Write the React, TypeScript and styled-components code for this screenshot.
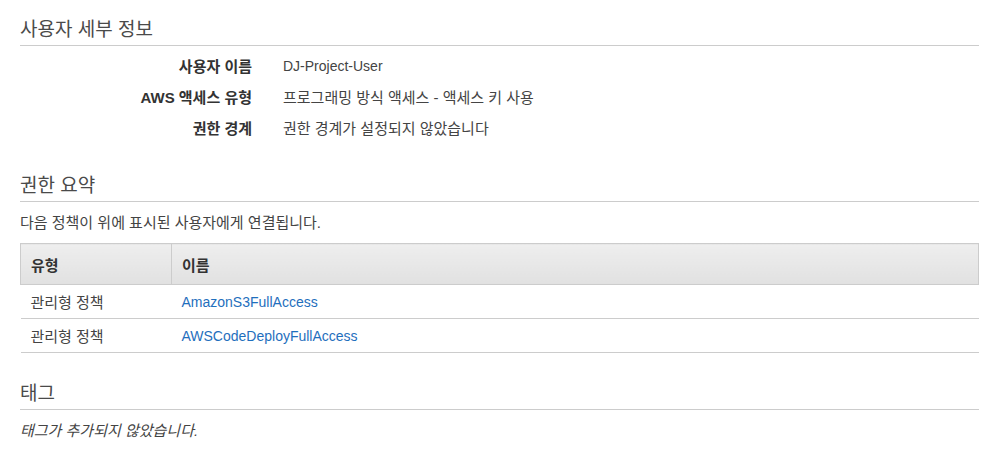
import React from "react";
import styled, { createGlobalStyle } from "styled-components";

const GlobalStyle = createGlobalStyle`
  html, body {
    margin: 0;
    padding: 0;
    background: #ffffff;
  }
  body {
    font-family: "Liberation Sans", Arial, "Noto Sans CJK KR", sans-serif;
    font-size: 15px;
    color: #444;
  }
`;

const Page = styled.div`
  padding: 19px 15px 20px 20px;
  display: flex;
  flex-direction: column;
`;

const Section = styled.section<{ $gap?: number }>`
  display: flex;
  flex-direction: column;
  margin-top: ${(p) => p.$gap ?? 0}px;
`;

const Heading = styled.h2`
  margin: 0;
  font-size: 19px;
  font-weight: normal;
  line-height: 22px;
  color: #4a4a4a;
  padding-bottom: 4px;
  border-bottom: 1px solid #cccccc;
`;

const DetailList = styled.dl`
  margin: 5px 0 0 0;
  display: grid;
  grid-template-columns: 232px 1fr;
  column-gap: 31px;
`;

const DetailLabel = styled.dt`
  margin: 0;
  text-align: right;
  font-weight: bold;
  color: #333;
  line-height: 31px;
`;

const DetailValue = styled.dd<{ $size?: number }>`
  margin: 0;
  line-height: 31px;
  color: #444;
  font-size: ${(p) => p.$size ?? 15}px;
`;

const Description = styled.p<{ $italic?: boolean }>`
  margin: 13px 0 0 0;
  line-height: 16px;
  color: #444;
  font-style: ${(p) => (p.$italic ? "italic" : "normal")};
`;

const Table = styled.table`
  margin-top: 12px;
  width: 100%;
  border-collapse: collapse;
`;

const HeadCell = styled.th<{ $width?: number }>`
  text-align: left;
  font-weight: bold;
  color: #333;
  height: 41px;
  padding: 0 10px;
  box-sizing: border-box;
  width: ${(p) => (p.$width ? `${p.$width}px` : "auto")};
  background: linear-gradient(to bottom, #eeeeee, #e1e1e1);
  border: 1px solid #cccccc;
`;

const Row = styled.tr`
  border-bottom: 1px solid #cccccc;
`;

const Cell = styled.td`
  height: 33px;
  padding: 0 10px;
  color: #444;
`;

const Link = styled.a`
  color: #1f6fbd;
  text-decoration: none;
  font-size: 14px;
`;

const details: { label: string; value: string; size?: number }[] = [
  { label: "사용자 이름", value: "DJ-Project-User", size: 14 },
  { label: "AWS 액세스 유형", value: "프로그래밍 방식 액세스 - 액세스 키 사용" },
  { label: "권한 경계", value: "권한 경계가 설정되지 않았습니다" },
];

const policies = ["AmazonS3FullAccess", "AWSCodeDeployFullAccess"];

export default function App() {
  return (
    <>
      <GlobalStyle />
      <Page>
        <Section>
          <Heading>사용자 세부 정보</Heading>
          <DetailList>
            {details.map((d) => (
              <React.Fragment key={d.label}>
                <DetailLabel>{d.label}</DetailLabel>
                <DetailValue $size={d.size}>{d.value}</DetailValue>
              </React.Fragment>
            ))}
          </DetailList>
        </Section>
        <Section $gap={31}>
          <Heading>권한 요약</Heading>
          <Description>다음 정책이 위에 표시된 사용자에게 연결됩니다.</Description>
          <Table>
            <thead>
              <tr>
                <HeadCell $width={151}>유형</HeadCell>
                <HeadCell>이름</HeadCell>
              </tr>
            </thead>
            <tbody>
              {policies.map((p) => (
                <Row key={p}>
                  <Cell>관리형 정책</Cell>
                  <Cell>
                    <Link href="#">{p}</Link>
                  </Cell>
                </Row>
              ))}
            </tbody>
          </Table>
        </Section>
        <Section $gap={30}>
          <Heading>태그</Heading>
          <Description $italic>태그가 추가되지 않았습니다.</Description>
        </Section>
      </Page>
    </>
  );
}
